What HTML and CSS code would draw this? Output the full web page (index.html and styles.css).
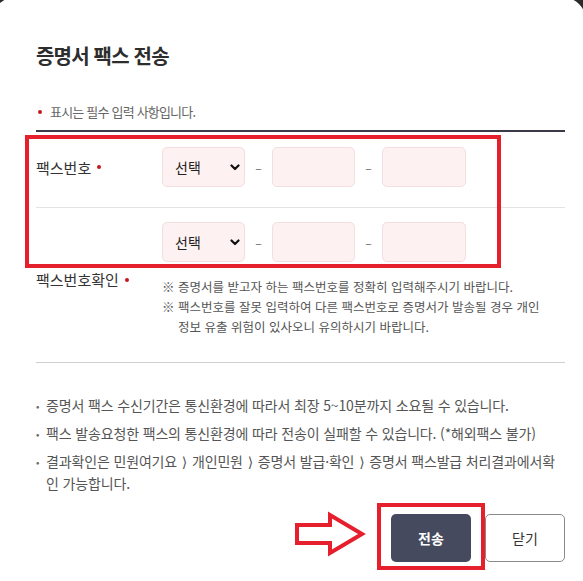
FILE: index.html
```html
<!DOCTYPE html>
<html lang="ko">
<head>
<meta charset="utf-8">
<title>증명서 팩스 전송</title>
<link rel="stylesheet" href="styles.css">
</head>
<body>
<div class="modal">
  <h2 class="title">증명서 팩스 전송</h2>
  <p class="req"><span class="dot"></span>표시는 필수 입력 사항입니다.</p>
  <div class="form">
    <div class="row r1">
      <div class="label">팩스번호 <span class="dot"></span></div>
      <div class="field">
        <div class="phone">
          <div class="sel"><span>선택</span><svg class="chev" width="10" height="7" viewBox="0 0 10 7"><path d="M1.5 1.5 L5 5 L8.5 1.5" fill="none" stroke="#111" stroke-width="2.2" stroke-linecap="round" stroke-linejoin="round"/></svg></div>
          <span class="dash">–</span>
          <div class="inp"></div>
          <span class="dash">–</span>
          <div class="inp last"></div>
        </div>
      </div>
    </div>
    <div class="row r2">
      <div class="label">팩스번호확인 <span class="dot"></span></div>
      <div class="field">
        <div class="phone">
          <div class="sel"><span>선택</span><svg class="chev" width="10" height="7" viewBox="0 0 10 7"><path d="M1.5 1.5 L5 5 L8.5 1.5" fill="none" stroke="#111" stroke-width="2.2" stroke-linecap="round" stroke-linejoin="round"/></svg></div>
          <span class="dash">–</span>
          <div class="inp"></div>
          <span class="dash">–</span>
          <div class="inp last"></div>
        </div>
        <div class="notes">
          <p>※ 증명서를 받고자 하는 팩스번호를 정확히 입력해주시기 바랍니다.</p>
          <p>※ 팩스번호를 잘못 입력하여 다른 팩스번호로 증명서가 발송될 경우 개인<br>정보 유출 위험이 있사오니 유의하시기 바랍니다.</p>
        </div>
      </div>
    </div>
  </div>
  <div class="sep"></div>
  <ul class="info">
    <li><span class="b">•</span><span>증명서 팩스 수신기간은 통신환경에 따라서 최장 5~10분까지 소요될 수 있습니다.</span></li>
    <li><span class="b">•</span><span>팩스 발송요청한 팩스의 통신환경에 따라 전송이 실패할 수 있습니다. (*해외팩스 불가)</span></li>
    <li><span class="b">•</span><span>결과확인은 민원여기요 <span class="gt">⟩</span> 개인민원 <span class="gt">⟩</span> 증명서 발급·확인 <span class="gt">⟩</span> 증명서 팩스발급 처리결과에서확<br>인 가능합니다.</span></li>
  </ul>
  <div class="btns">
    <button class="btn send" type="button">전송</button>
    <button class="btn close" type="button">닫기</button>
  </div>

  <div class="mark mark-rows"></div>
  <div class="mark mark-btn"></div>
  <svg class="arrow" width="80" height="54" viewBox="0 0 80 54"><polygon points="7,17 40,17 40,7 72,26 40,45 40,35 7,35" fill="#fff" stroke="#e51f2b" stroke-width="4" stroke-linejoin="miter"/></svg>
</div>
</body>
</html>
```

FILE: styles.css
```css
html, body {
  margin: 0;
  padding: 0;
}
body {
  background: #2b2b2b;
  font-family: "Noto Sans CJK KR", "Noto Sans", sans-serif;
  overflow: hidden;
  height: 581px;
}
.modal {
  position: relative;
  background: #fff;
  margin: -3px 0 0 -8px;
  width: 594px;
  height: 584px;
  border-radius: 24px 24px 0 0;
  padding: 46px 21px 0 44px;
  box-sizing: border-box;
}
.title {
  margin: 0;
  font-size: 20px;
  line-height: 26px;
  font-weight: 700;
  color: #2d2d2d;
  letter-spacing: -0.8px;
}
.dot {
  display: inline-block;
  width: 4px;
  height: 4px;
  border-radius: 50%;
  background: #c8161d;
}
.req {
  margin: 33px 0 0;
  font-size: 13px;
  line-height: 20px;
  color: #666;
  letter-spacing: -0.8px;
  display: flex;
  align-items: center;
}
.req .dot {
  margin: 0 8px 0 2px;
}
.form {
  margin-top: 8px;
  border-top: 2px solid #3a3a48;
}
.row {
  display: flex;
  align-items: center;
  border-bottom: 1px solid #e3e3e3;
}
.r1 {
  padding: 15px 0 20px;
}
.r2 {
  padding: 14px 0 10px;
  border-bottom: none;
}
.label {
  width: 126px;
  flex: none;
  font-size: 15px;
  color: #333;
  display: flex;
  align-items: center;
  gap: 6px;
}
.phone {
  display: flex;
  align-items: center;
}
.sel {
  width: 83px;
  height: 40px;
  box-sizing: border-box;
  border: 1px solid #f3dfdf;
  background: #fdf1f1;
  border-radius: 5px;
  display: flex;
  align-items: center;
  justify-content: space-between;
  padding: 0 4px 0 12px;
  font-size: 14px;
  color: #222;
}
.dash {
  width: 27px;
  text-align: center;
  color: #666;
  font-size: 12px;
}
.inp {
  width: 83px;
  height: 40px;
  box-sizing: border-box;
  border: 1px solid #f3dfdf;
  background: #fdf1f1;
  border-radius: 5px;
}
.inp.last {
  width: 84px;
}
.notes {
  margin-top: 15px;
  font-size: 12.5px;
  line-height: 20px;
  color: #555;
}
.notes p {
  margin: 0;
  padding-left: 16px;
  text-indent: -16px;
  white-space: nowrap;
}
.sep {
  margin-top: 15px;
  border-top: 1px solid #cfcfcf;
}
.info {
  list-style: none;
  margin: 32px 0 0;
  padding: 0;
  font-size: 14px;
  line-height: 21px;
  color: #555;
  letter-spacing: -0.15px;
}
.info li {
  display: flex;
  margin-bottom: 7px;
  white-space: nowrap;
}
.info li:last-child {
  margin-bottom: 0;
}
.info .b {
  width: 10px;
  flex: none;
  font-size: 10px;
  color: #666;
}
.info .gt {
  font-family: "DejaVu Sans", sans-serif;
  font-size: 14px;
  margin: 0 1px;
}
.btns {
  display: flex;
  justify-content: flex-end;
  gap: 14px;
  margin-top: 20px;
}
.btn {
  width: 80px;
  height: 48px;
  border-radius: 5px;
  font-family: inherit;
  font-size: 14px;
  padding: 0;
}
.send {
  background: #464a5e;
  color: #fff;
  font-weight: 700;
  border: none;
}
.close {
  background: #fff;
  border: 1px solid #8a8a8a;
  color: #333;
}
.mark {
  position: absolute;
  border: 4px solid #e51f2b;
  box-sizing: border-box;
}
.mark-rows {
  left: 33px;
  top: 138px;
  width: 476px;
  height: 133px;
}
.mark-btn {
  left: 385px;
  top: 506px;
  width: 108px;
  height: 67px;
}
.arrow {
  position: absolute;
  left: 298px;
  top: 511px;
}
```
